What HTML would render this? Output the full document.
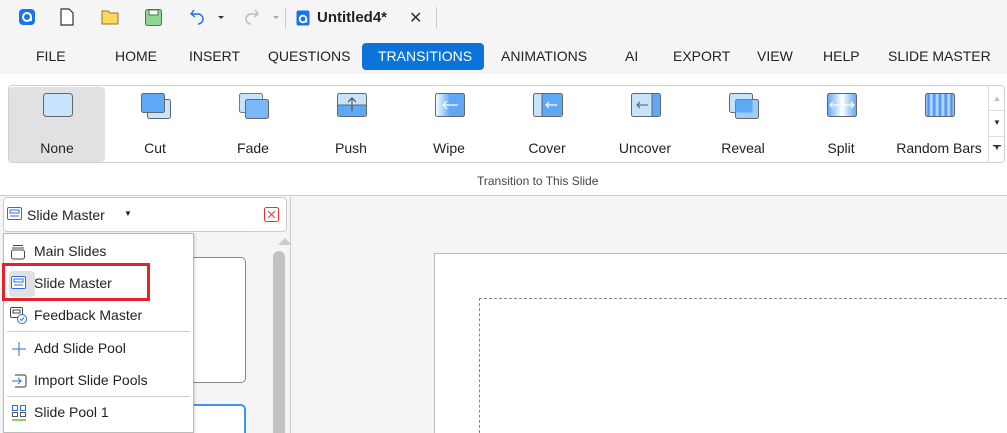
<!DOCTYPE html>
<html><head><meta charset="utf-8"><style>
*{margin:0;padding:0;box-sizing:border-box}
html,body{width:1007px;height:433px;overflow:hidden}
body{background:#f5f5f5;font-family:"Segoe UI","Liberation Sans",sans-serif;color:#222;position:relative}
.a{position:absolute}
.menu span{position:absolute;top:48px;font-size:14px;color:#222}
.item{position:absolute;top:86px;width:96px;height:76px;text-align:center}
.item .lbl{position:absolute;top:54px;left:0;right:0;font-size:14px;color:#222}
.item svg{position:absolute;left:33px;top:6px}
.pm{position:absolute;left:10px;font-size:14px;color:#222}
.pm span{position:absolute;left:24px;top:0;white-space:nowrap}
</style></head><body>
<div class="a" style="left:0;top:0;width:1007px;height:74px;background:#f5f5f5"></div>
<svg class="a" style="left:18px;top:8px" width="18" height="18"><rect x="1" y="1" width="16" height="16" rx="4" fill="#1a73e8"/><circle cx="9" cy="9" r="4" fill="none" stroke="#fff" stroke-width="2"/><path d="M13 9v4" stroke="#fff" stroke-width="2"/></svg>
<svg class="a" style="left:59px;top:8px" width="16" height="18"><path d="M2 1h8l4 4v12H2z" fill="#fff" stroke="#333" stroke-width="1.2"/></svg>
<svg class="a" style="left:101px;top:9px" width="18" height="16"><path d="M1 2h6l2 2h8v11H1z" fill="#fcd85e" stroke="#8a7a30"/></svg>
<svg class="a" style="left:145px;top:9px" width="17" height="17"><rect x="0.5" y="0.5" width="16" height="16" rx="2" fill="#8fd694" stroke="#4a7a4a"/><rect x="4" y="1" width="9" height="5" fill="#fff" stroke="#4a7a4a"/></svg>
<svg class="a" style="left:188px;top:8px" width="40" height="18"><path d="M4 4 L1 8 L5 11 M1 8 H8 a5 5 0 0 1 0 10" transform="translate(2,-2)" fill="none" stroke="#1a73e8" stroke-width="1.4"/><path d="M30 8l3 3 3-3z" fill="#333"/></svg>
<svg class="a" style="left:243px;top:8px" width="40" height="18"><path d="M12 2 L15 6 L11 9 M15 6 H8 a5 5 0 0 0 0 10" fill="none" stroke="#bbb" stroke-width="1.4"/><path d="M30 8l3 3 3-3z" fill="#aaa"/></svg>
<div class="a" style="left:285px;top:7px;width:1px;height:22px;background:#ccc"></div>
<svg class="a" style="left:296px;top:10px" width="16" height="17"><rect x="0.5" y="0.5" width="13" height="15" rx="2" fill="#1a73e8"/><circle cx="7" cy="9" r="3.3" fill="none" stroke="#fff" stroke-width="1.8"/><path d="M10.3 9v3.5" stroke="#fff" stroke-width="1.8"/></svg>
<div class="a" style="left:317px;top:9px;font-size:15px;font-weight:bold;color:#222">Untitled4*</div>
<div class="a" style="left:409px;top:8px;font-size:16px;color:#333">✕</div>
<div class="a" style="left:436px;top:7px;width:1px;height:22px;background:#ccc"></div>
<div class="menu">
<span style="left:36px">FILE</span><span style="left:115px">HOME</span><span style="left:189px">INSERT</span><span style="left:268px">QUESTIONS</span>
<div class="a" style="left:362px;top:43px;width:122px;height:27px;background:#0a74da;border-radius:4px"></div>
<span style="left:378px;color:#fff">TRANSITIONS</span>
<span style="left:501px">ANIMATIONS</span><span style="left:625px">AI</span><span style="left:673px">EXPORT</span><span style="left:757px">VIEW</span><span style="left:823px">HELP</span><span style="left:888px">SLIDE MASTER</span>
</div>
<div class="a" style="left:0;top:74px;width:1007px;height:122px;background:#fff;border-bottom:1px solid #ccc"></div>
<div class="a" style="left:8px;top:85px;width:997px;height:78px;border:1px solid #cfcfcf;border-radius:4px;background:#fff"></div>
<div class="a" style="left:9px;top:87px;width:96px;height:75px;background:#e1e1e3;border-radius:4px"></div>
<div class="a" style="left:988px;top:86px;width:1px;height:76px;background:#ddd"></div>
<div class="a" style="left:989px;top:110px;width:15px;height:1px;background:#ddd"></div>
<div class="a" style="left:989px;top:136px;width:15px;height:1px;background:#ddd"></div>
<div class="a" style="left:993px;top:94px;font-size:8px;color:#bbb">▲</div>
<div class="a" style="left:993px;top:118px;font-size:8px;color:#333">▼</div>
<div class="a" style="left:993px;top:143px;font-size:8px;color:#333">▼</div>
<svg class="a" style="left:993px;top:145px" width="10" height="3"><rect width="8" height="1.3" fill="#333"/></svg>

<div class="item" style="left:9px"><svg width="32" height="28"><rect x="1.5" y="1.5" width="29" height="23" rx="3" fill="#c6e4fb" stroke="#666"/></svg><div class="lbl">None</div></div>
<div class="item" style="left:107px"><svg width="32" height="28"><rect x="7.5" y="7.5" width="23" height="19" rx="2" fill="#c6e4fb" stroke="#666"/><rect x="1.5" y="1.5" width="23" height="19" rx="2" fill="#5fa8f6" stroke="#666"/></svg><div class="lbl">Cut</div></div>
<div class="item" style="left:205px"><svg width="32" height="28"><rect x="1.5" y="1.5" width="23" height="19" rx="2" fill="#c6e4fb" stroke="#777"/><rect x="7.5" y="7.5" width="23" height="19" rx="2" fill="#7ab8f8" stroke="#666"/></svg><div class="lbl">Fade</div></div>
<div class="item" style="left:303px"><svg width="32" height="28"><rect x="1.5" y="1.5" width="29" height="23" rx="2" fill="#c6e4fb" stroke="#666"/><rect x="2" y="13" width="28" height="11" fill="#5fa8f6"/><path d="M16 19V6M12 10l4-4 4 4" fill="none" stroke="#444"/><line x1="2" y1="13" x2="30" y2="13" stroke="#666"/></svg><div class="lbl">Push</div></div>
<div class="item" style="left:401px"><svg width="32" height="28"><defs><linearGradient id="g1"><stop offset="0" stop-color="#fff"/><stop offset="0.5" stop-color="#5fa8f6"/></linearGradient></defs><rect x="1.5" y="1.5" width="29" height="23" rx="2" fill="url(#g1)" stroke="#666"/><path d="M24 13H9M13 9l-4 4 4 4" fill="none" stroke="#fff" stroke-width="1.2"/></svg><div class="lbl">Wipe</div></div>
<div class="item" style="left:499px"><svg width="32" height="28"><rect x="1.5" y="1.5" width="29" height="23" rx="2" fill="#c6e4fb" stroke="#666"/><rect x="10" y="2" width="20" height="22" fill="#5fa8f6"/><line x1="10" y1="2" x2="10" y2="24" stroke="#666"/><path d="M25 13H14M17 10l-3 3 3 3" fill="none" stroke="#fff" stroke-width="1.2"/></svg><div class="lbl">Cover</div></div>
<div class="item" style="left:597px"><svg width="32" height="28"><rect x="1.5" y="1.5" width="29" height="23" rx="2" fill="#c6e4fb" stroke="#666"/><rect x="22" y="2" width="8" height="22" fill="#5fa8f6"/><line x1="22" y1="2" x2="22" y2="24" stroke="#666"/><path d="M18 13H7M10 10l-3 3 3 3" fill="none" stroke="#555"/></svg><div class="lbl">Uncover</div></div>
<div class="item" style="left:695px"><svg width="32" height="28"><rect x="1.5" y="1.5" width="23" height="19" rx="2" fill="#c6e4fb" stroke="#666"/><rect x="7.5" y="7.5" width="23" height="19" rx="2" fill="#9ccdfb" stroke="#666"/><rect x="7.5" y="7.5" width="17" height="13" fill="#5fa8f6"/></svg><div class="lbl">Reveal</div></div>
<div class="item" style="left:793px"><svg width="32" height="28"><defs><linearGradient id="g2"><stop offset="0" stop-color="#5fa8f6"/><stop offset="0.5" stop-color="#fff"/><stop offset="1" stop-color="#5fa8f6"/></linearGradient></defs><rect x="1.5" y="1.5" width="29" height="23" rx="2" fill="url(#g2)" stroke="#666"/><path d="M4 13H28M7 10l-3 3 3 3M25 10l3 3-3 3" fill="none" stroke="#fff" stroke-width="1.2"/></svg><div class="lbl">Split</div></div>
<div class="item" style="left:891px"><svg width="32" height="28"><defs><linearGradient id="g3" spreadMethod="repeat" x2="0.2"><stop offset="0" stop-color="#c6e4fb"/><stop offset="0.5" stop-color="#3f8cf0"/><stop offset="1" stop-color="#c6e4fb"/></linearGradient></defs><rect x="1.5" y="1.5" width="29" height="23" rx="2" fill="url(#g3)" stroke="#666"/></svg><div class="lbl">Random Bars</div></div>
<div class="a" style="left:477px;top:174px;font-size:12px;color:#444">Transition to This Slide</div>

<div class="a" style="left:290px;top:197px;width:1px;height:236px;background:#ccc"></div>
<div class="a" style="left:3px;top:197px;width:284px;height:35px;background:#fff;border:1px solid #ccc;border-radius:4px"></div>
<svg class="a" style="left:7px;top:207px" width="16" height="14"><rect x="0.5" y="0.5" width="14" height="12" rx="1.5" fill="#fff" stroke="#2b6fd6"/><rect x="3" y="3" width="9" height="3" fill="none" stroke="#2b6fd6"/><line x1="3" y1="9" x2="12" y2="9" stroke="#2b6fd6"/></svg>
<div class="a" style="left:27px;top:207px;font-size:14px">Slide Master</div>
<div class="a" style="left:124px;top:209px;font-size:8px">▼</div>
<svg class="a" style="left:264px;top:207px" width="16" height="16"><rect x="0.5" y="0.5" width="14" height="14" rx="2" fill="#fff" stroke="#e33"/><path d="M4 4l7 7M11 4l-7 7" stroke="#e33"/></svg>
<div class="a" style="left:278px;top:238px;width:0;height:0;border-left:7px solid transparent;border-right:7px solid transparent;border-bottom:7px solid #ccc"></div>
<div class="a" style="left:273px;top:251px;width:12px;height:182px;background:#c2c2c2;border-radius:6px 6px 0 0"></div>
<div class="a" style="left:150px;top:257px;width:96px;height:126px;background:#fff;border:1px solid #888;border-radius:5px"></div>
<div class="a" style="left:150px;top:404px;width:96px;height:29px;background:#fff;border:2px solid #3d95f2;border-bottom:none;border-radius:5px 5px 0 0"></div>
<div class="a" style="left:434px;top:253px;width:573px;height:180px;background:#fff;border:1px solid #bbb;border-right:none;border-bottom:none"></div>
<div class="a" style="left:479px;top:298px;width:528px;height:135px;border:1px dashed #888;border-right:none;border-bottom:none"></div>
<div class="a" style="left:3px;top:233px;width:191px;height:200px;background:#fff;border:1px solid #bbb;box-shadow:1px 1px 3px rgba(0,0,0,.15)"></div>
<div class="pm" style="top:243px"><svg class="a" style="left:0;top:1px" width="16" height="16"><path d="M3 1.5h10M2 4h12" stroke="#444"/><rect x="1.5" y="6" width="13" height="9" rx="2" fill="none" stroke="#444"/></svg><span>Main Slides</span></div>
<div class="a" style="left:9px;top:271px;width:26px;height:26px;background:#e1e1e3;border-radius:4px"></div>
<div class="pm" style="top:275px"><svg class="a" style="left:1px;top:1px" width="16" height="14"><rect x="0.5" y="0.5" width="14" height="12" rx="1.5" fill="#fff" stroke="#2b6fd6"/><rect x="3" y="3" width="9" height="3" fill="none" stroke="#2b6fd6"/><line x1="3" y1="9" x2="12" y2="9" stroke="#2b6fd6"/></svg><span>Slide Master</span></div>
<div class="a" style="left:2px;top:263px;width:148px;height:38px;border:3px solid #e5222a"></div>
<div class="pm" style="top:307px"><svg class="a" style="left:0;top:0" width="18" height="18"><rect x="0.5" y="0.5" width="12" height="10" rx="1.5" fill="#fff" stroke="#444"/><rect x="3" y="3" width="7" height="3" fill="none" stroke="#444"/><circle cx="12" cy="12" r="4.5" fill="#fff" stroke="#2b6fd6"/><path d="M10 12l1.5 1.5 2.5-3" fill="none" stroke="#2b6fd6"/></svg><span>Feedback Master</span></div>
<div class="a" style="left:7px;top:331px;width:183px;height:1px;background:#ccc"></div>
<div class="pm" style="top:340px"><svg class="a" style="left:1px;top:1px" width="16" height="16"><path d="M8 1v14M1 8h14" stroke="#2b6fd6"/></svg><span>Add Slide Pool</span></div>
<div class="pm" style="top:372px"><svg class="a" style="left:1px;top:1px" width="16" height="16"><path d="M4 2h9a2 2 0 0 1 2 2v8a2 2 0 0 1-2 2H4" fill="none" stroke="#333"/><path d="M1 8h9M7 5l3 3-3 3" fill="none" stroke="#2b6fd6"/></svg><span>Import Slide Pools</span></div>
<div class="a" style="left:7px;top:396px;width:183px;height:1px;background:#ccc"></div>
<div class="pm" style="top:404px"><svg class="a" style="left:1px;top:0" width="16" height="18"><rect x="1.5" y="1.5" width="5" height="5" fill="none" stroke="#2b6fd6"/><rect x="9.5" y="1.5" width="5" height="5" fill="none" stroke="#2b6fd6"/><rect x="1.5" y="8.5" width="5" height="4" fill="none" stroke="#555"/><rect x="9.5" y="8.5" width="5" height="4" fill="none" stroke="#555"/><path d="M1 16h14" stroke="#6cc04a" stroke-width="1.6"/></svg><span>Slide Pool 1</span></div>
</body></html>
